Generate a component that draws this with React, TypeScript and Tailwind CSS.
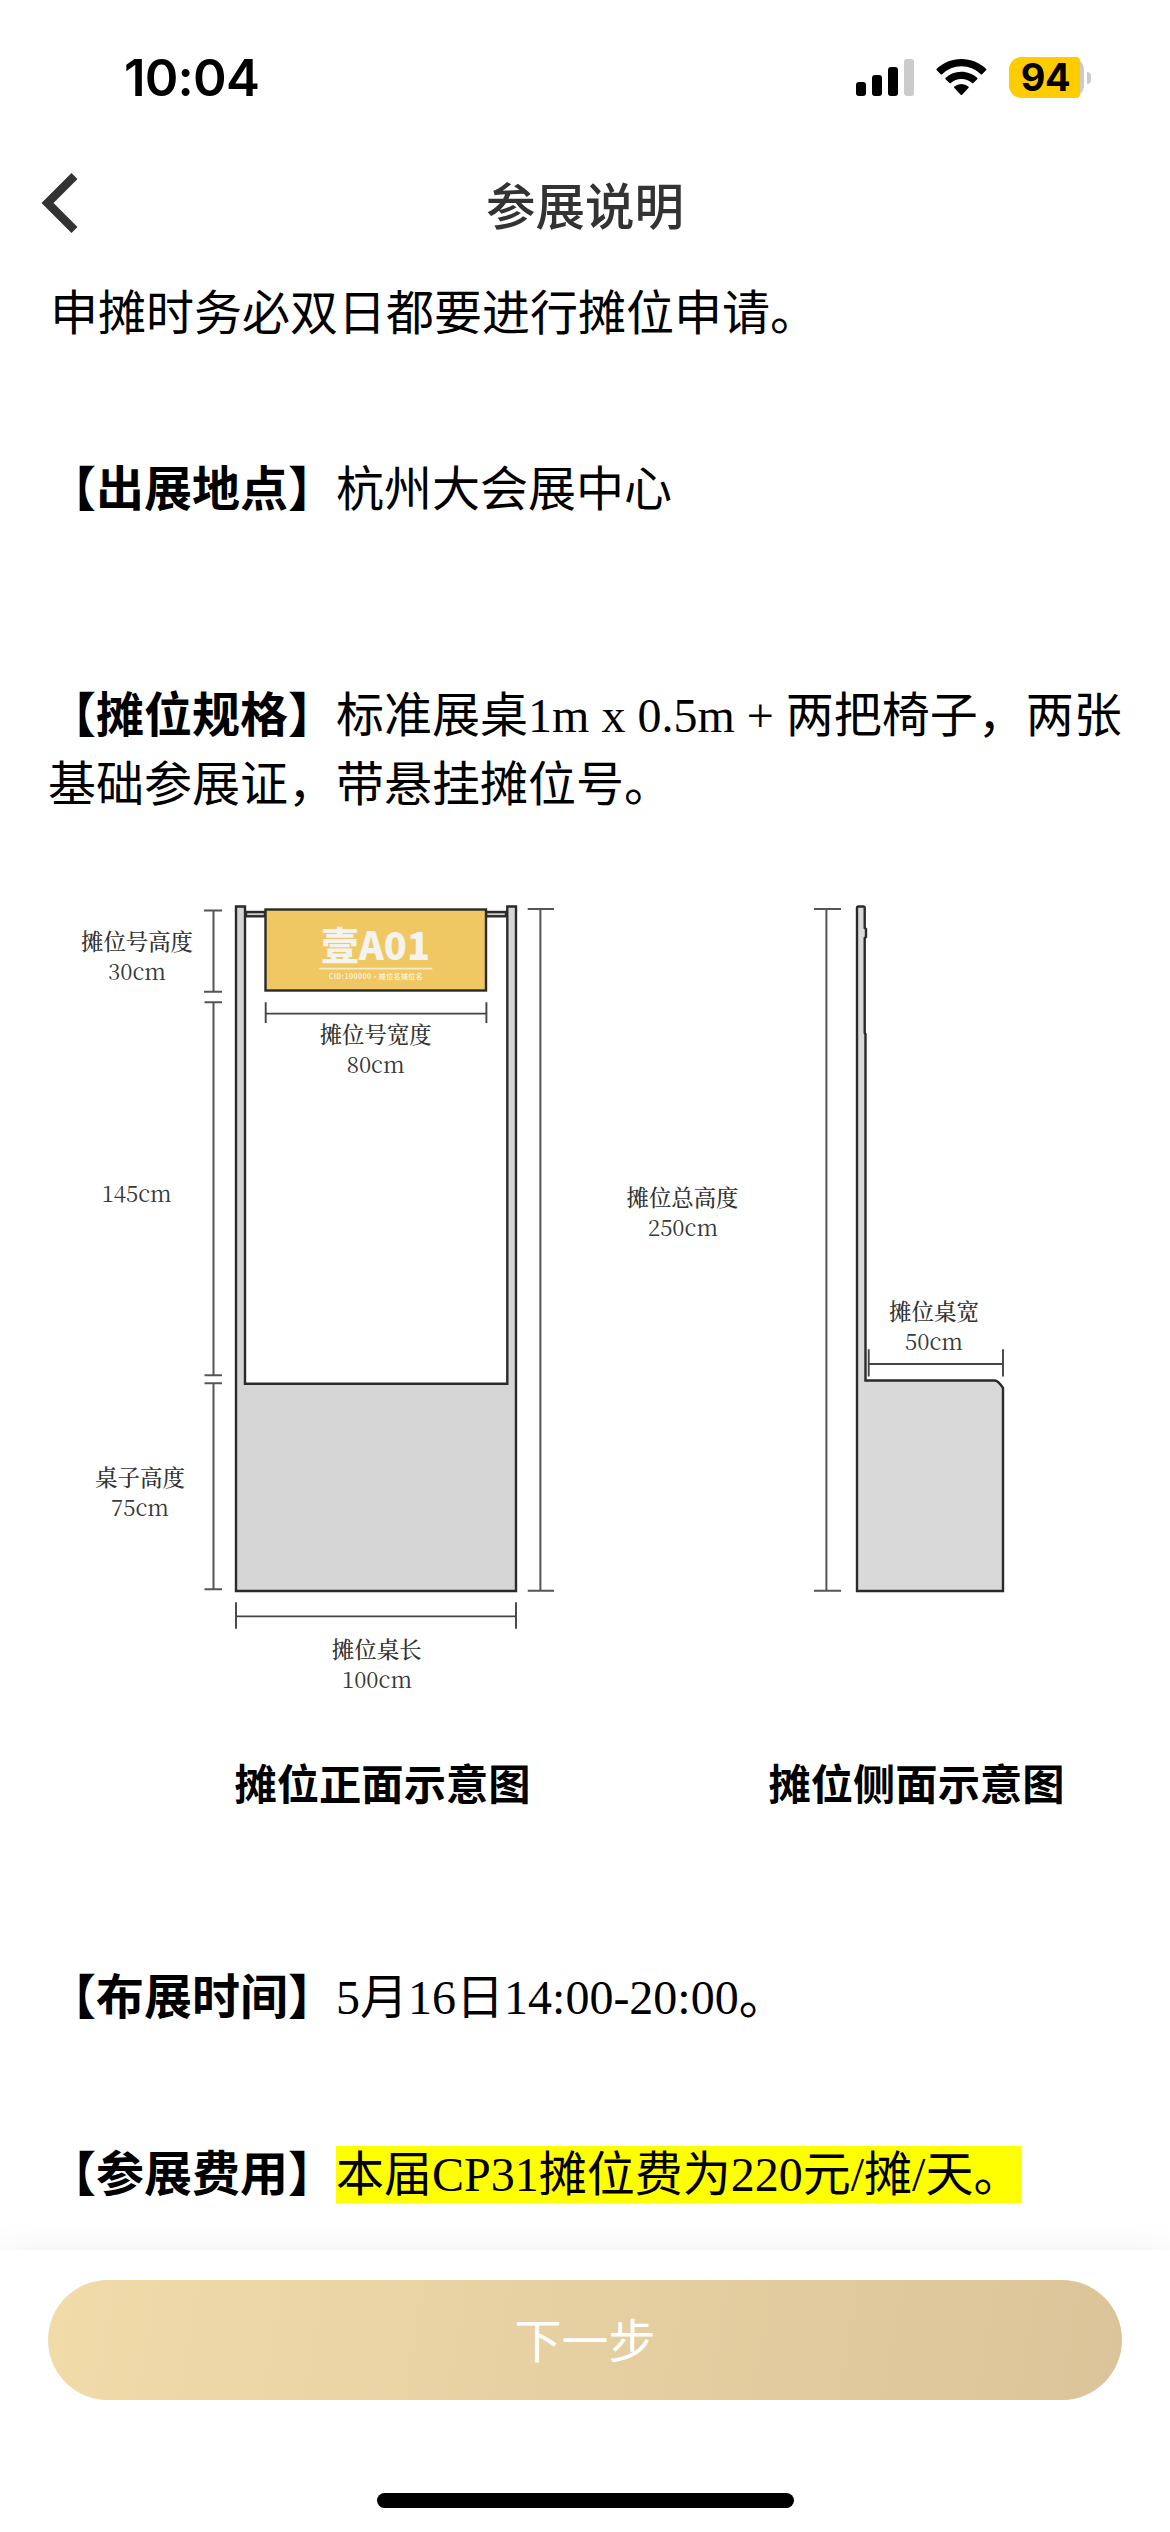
import React from "react";

const SERIF = "font-['Liberation_Serif','Noto_Sans_CJK_SC',serif]";

function StatusBar() {
  return (
    <div className="flex h-[141px] shrink-0 items-start justify-between pl-[124px] pr-[79px] pt-[57px]">
      <div className="text-[51px] font-semibold leading-[42px] tracking-[-0.8px] text-black font-['Inter',sans-serif]">10:04</div>
      <div className="flex items-start">
        <svg width="58" height="41" viewBox="0 0 58 41" className="mr-[22px]">
          <rect x="0" y="25" width="10" height="14" rx="3" fill="#000" />
          <rect x="16" y="18" width="10" height="21" rx="3" fill="#000" />
          <rect x="32" y="10" width="10" height="29" rx="3" fill="#000" />
          <rect x="48" y="2" width="10" height="37" rx="3" fill="#cbcbcb" />
        </svg>
        <svg width="51" height="41" viewBox="0 0 51 41" className="mr-[22px]">
          <g fill="#000">
            <path d="M.8 13.3a1 1 0 0 1 0-1.5C7.2 5.600 16 2 25.400 2s18.200 3.600 24.600 9.800a1 1 0 0 1 0 1.500l-3.900 3.900a1 1 0 0 1-1.400 0A27.800 27.800 0 0 0 25.400 9.200a27.800 27.800 0 0 0-19.300 8 1 1 0 0 1-1.400 0z" />
            <path d="M9.600 22.200a1 1 0 0 1 0-1.400A22.800 22.800 0 0 1 25.400 14.700c6 0 11.600 2.300 15.800 6.100a1 1 0 0 1 0 1.400l-3.900 3.900a1 1 0 0 1-1.300 0A15.600 15.600 0 0 0 25.400 22a15.600 15.600 0 0 0-10.600 4.100 1 1 0 0 1-1.300 0z" />
            <path d="M18.400 31.100a1 1 0 0 1 0-1.500 10.600 10.600 0 0 1 14 0 1 1 0 0 1 0 1.500l-6.300 6.600a1 1 0 0 1-1.400 0z" />
          </g>
        </svg>
        <div className="flex items-center">
          <div className="flex h-[41px] w-[75px] rounded-[13px] bg-[#cbcbcb]">
            <div className="w-[71px] rounded-l-[13px] rounded-r-[4px] bg-[#ffcc00] pl-[2px] text-center text-[38px] font-bold leading-[41px] tracking-[-0.5px] text-black font-['Inter',sans-serif]">
              94
            </div>
          </div>
          <div className="ml-[3px] h-[12px] w-[4px] rounded-r-full bg-[#cbcbcb]" />
        </div>
      </div>
    </div>
  );
}

function NavBar() {
  return (
    <div className="grid h-[136px] shrink-0 grid-cols-[200px_1fr_200px] items-start">
      <svg width="40" height="62" viewBox="0 0 40 62" className="ml-[41px] mt-[31px]">
        <path d="M33.500 4L6.500 31L33.500 58" fill="none" stroke="#333" strokeWidth="8.500" />
      </svg>
      <h1 className="mt-[28px] text-center text-[49.500px] font-medium leading-[70px] text-[#333] font-['Noto_Sans_CJK_SC',sans-serif]">参展说明</h1>
    </div>
  );
}

type DimProps = { a: number; b: number; at: number; cap: [number, number] };

/* Vertical dimension line from y=a to y=b */
function VDim({ a, b, at, cap }: DimProps) {
  return (
    <path
      d={`M${at} ${a}V${b}M${cap[0]} ${a}H${cap[1]}M${cap[0]} ${b}H${cap[1]}`}
      stroke="#555"
      strokeWidth="2"
      fill="none"
    />
  );
}

/* Horizontal dimension line from x=a to x=b */
function HDim({ a, b, at, cap }: DimProps) {
  return (
    <path
      d={`M${a} ${at}H${b}M${a} ${cap[0]}V${cap[1]}M${b} ${cap[0]}V${cap[1]}`}
      stroke="#444"
      strokeWidth="1.900"
      fill="none"
    />
  );
}

type LabelProps = { x: number; y: number; w: number; children: string };

function Label({ x, y, w, children }: LabelProps) {
  return (
    <text
      x={x}
      y={y}
      textLength={w}
      lengthAdjust="spacingAndGlyphs"
      textAnchor="middle"
      fill="#333"
      className="text-[22.500px] font-medium font-['Noto_Serif_CJK_SC','Noto_Sans_CJK_SC',serif]"
    >
      {children}
    </text>
  );
}

function Measure({ x, y, w, children }: LabelProps) {
  return (
    <text
      x={x}
      y={y}
      textLength={w}
      lengthAdjust="spacingAndGlyphs"
      textAnchor="middle"
      fill="#3a3a3a"
      className="text-[23px] font-['Noto_Serif_CJK_SC','Liberation_Serif',serif]"
    >
      {children}
    </text>
  );
}

function BoothDiagram() {
  return (
    <svg width="1074" height="970" viewBox="48 880 1074 970" className="block">
      {/* front view */}
      <g stroke="#2a2a2a" strokeWidth="2.400">
        <path d="M236 1591V906.500H245V1383.700H507.300V906.500H516V1591Z" fill="#d5d5d5" />
        <rect x="246" y="912" width="19" height="4.300" fill="#c9c9c9" />
        <rect x="486" y="912" width="20" height="4.300" fill="#c9c9c9" />
        <rect x="265.500" y="909.500" width="220.500" height="81" fill="#efc763" />
      </g>
      <text
        x="375.500"
        y="960"
        textAnchor="middle"
        textLength="109"
        lengthAdjust="spacingAndGlyphs"
        fill="#f4f3f0"
        className="text-[38.500px] font-black font-['Noto_Sans_CJK_SC',sans-serif]"
      >
        壹A01
      </text>
      <path d="M319.300 968.700H432.300" stroke="#f7ebcd" strokeWidth="1.800" />
      <text
        x="375.700"
        y="978.500"
        textAnchor="middle"
        textLength="94"
        fill="#f9efd5"
        className="text-[7px] font-bold font-['Noto_Sans_CJK_SC',sans-serif]"
      >
        CID:100000·摊位名摊位名
      </text>

      <VDim a={910.6} b={991.7} at={213.5} cap={[204, 222]} />
      <VDim a={1002.3} b={1375.3} at={213.5} cap={[204.5, 222]} />
      <VDim a={1383.3} b={1589.3} at={213.5} cap={[204.5, 222]} />
      <VDim a={909} b={1590.7} at={540.4} cap={[527.7, 554]} />
      <HDim a={265.7} b={486.4} at={1013.6} cap={[1002.3, 1023]} />
      <HDim a={236} b={516} at={1616.4} cap={[1602.3, 1628.7]} />

      <Label x={137} y={949.5} w={112}>摊位号高度</Label>
      <Measure x={137} y={980} w={58}>30cm</Measure>
      <Label x={375.700} y={1042.700} w={112}>摊位号宽度</Label>
      <Measure x={375.700} y={1073} w={58}>80cm</Measure>
      <Measure x={136.700} y={1202} w={70}>145cm</Measure>
      <Label x={140} y={1486} w={90}>桌子高度</Label>
      <Measure x={140} y={1516} w={58}>75cm</Measure>
      <Label x={376.700} y={1657.500} w={90}>摊位桌长</Label>
      <Measure x={377} y={1688} w={70}>100cm</Measure>

      {/* side view */}
      <path
        d="M857 1591V908Q857 906.500 858.500 906.500H863.200Q864.700 906.500 864.700 908V928L866 929V937L864.700 938V1033L865.500 1034V1380.500H995Q998 1380.500 1003 1388V1591Z"
        fill="#d9d9d9"
        stroke="#2a2a2a"
        strokeWidth="2.400"
      />
      <VDim a={909} b={1590.8} at={826.4} cap={[814, 841]} />
      <HDim a={868.7} b={1003} at={1364} cap={[1349.3, 1376.5]} />
      <Label x={682.500} y={1206} w={112}>摊位总高度</Label>
      <Measure x={683} y={1236} w={70}>250cm</Measure>
      <Label x={934} y={1319.500} w={90}>摊位桌宽</Label>
      <Measure x={934} y={1350} w={58}>50cm</Measure>

      <g className="text-[42.300px] font-bold font-['Noto_Sans_CJK_SC',sans-serif]" fill="#000" textAnchor="middle">
        <text x="382.500" y="1800">摊位正面示意图</text>
        <text x="916.500" y="1800">摊位侧面示意图</text>
      </g>
    </svg>
  );
}

function Section({ title, children }: { title: string; children: React.ReactNode }) {
  return (
    <p>
      <strong className="font-bold">【{title}】</strong>
      {children}
    </p>
  );
}

export default function App() {
  return (
    <div className="flex h-[2532px] w-[1170px] flex-col overflow-hidden bg-white">
      <StatusBar />
      <NavBar />
      <main className={`min-h-0 flex-1 px-12 pt-[2px] text-[48px] leading-[69px] text-black ${SERIF}`}>
        <p className="pl-[2px]">申摊时务必双日都要进行摊位申请。</p>
        <div className="mt-[107px]">
          <Section title="出展地点">杭州大会展中心</Section>
        </div>
        <div className="mt-[157px]">
          <Section title="摊位规格">标准展桌1m x 0.5m + 两把椅子，两张基础参展证，带悬挂摊位号。</Section>
        </div>
        <div className="mt-[61px]">
          <BoothDiagram />
        </div>
        <div className="mt-[113px]">
          <Section title="布展时间">5月16日14:00-20:00。</Section>
        </div>
        <div className="mt-[108px]">
          <Section title="参展费用">
            <span className="bg-[#ffff00] pb-[2px] pt-[2px]">本届CP31摊位费为220元/摊/天。</span>
          </Section>
        </div>
      </main>
      <footer className="relative flex h-[282px] shrink-0 flex-col items-center bg-white px-12 pt-[30px] shadow-[0_0_36px_rgba(0,0,0,0.06)]">
        <button className="h-[120px] w-full rounded-full bg-[linear-gradient(100deg,#f1dba9,#dbc499)] pb-[5px] text-[47px] leading-none text-white font-['Noto_Sans_CJK_SC',sans-serif]">
          下一步
        </button>
        <div className="mt-[93px] h-[15px] w-[417px] rounded-full bg-black" />
      </footer>
    </div>
  );
}
